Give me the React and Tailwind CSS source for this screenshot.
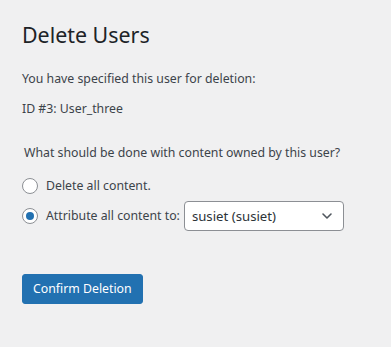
import React, { useState } from 'react';

const App = () => {
  const [choice, setChoice] = useState('reassign');

  return (
    <div className="min-h-[347px] w-[391px] bg-[#f0f0f1] text-[#3c434a] text-[12.3px] leading-[18px]" style={{ fontFamily: '"Segoe UI", "Noto Sans", sans-serif' }}>
      <div className="pl-[22px] pr-5 pt-[20px]">
        <h1 className="text-[21.4px] font-normal leading-[30px] text-[#1d2327]">Delete Users</h1>

        <p className="mt-[20px]">You have specified this user for deletion:</p>
        <p className="mt-[12px]">ID #3: User_three</p>

        <fieldset className="mt-[26px]">
          <p className="pl-[2px]">What should be done with content owned by this user?</p>
          <ul className="mt-[13px] flex flex-col gap-[4px]">
            <li className="flex items-center h-[22px]">
              <label className="flex items-center gap-[8px] cursor-pointer">
                <span
                  onClick={() => setChoice('delete')}
                  className="w-4 h-4 rounded-full border border-[#8c8f94] bg-white flex items-center justify-center"
                >
                  {choice === 'delete' && <span className="w-2 h-2 rounded-full bg-[#2271b1]" />}
                </span>
                <span onClick={() => setChoice('delete')}>Delete all content.</span>
              </label>
            </li>
            <li className="flex items-center h-[30px]">
              <label className="flex items-center gap-[8px] cursor-pointer">
                <span
                  onClick={() => setChoice('reassign')}
                  className="w-4 h-4 rounded-full border border-[#8c8f94] bg-white flex items-center justify-center"
                >
                  {choice === 'reassign' && <span className="w-2 h-2 rounded-full bg-[#2271b1]" />}
                </span>
                <span onClick={() => setChoice('reassign')}>Attribute all content to:</span>
              </label>
              <div className="ml-[4px] w-[160px] h-[30px] rounded-[4px] border border-[#8c8f94] bg-white flex items-center justify-between pl-[7px] pr-[8px] text-[13.2px] text-[#2c3338]">
                <span>susiet (susiet)</span>
                <svg width="16" height="16" viewBox="0 0 20 20" fill="none">
                  <path d="M5 7.5l5 5 5-5" stroke="#50575e" strokeWidth="2" strokeLinecap="round" strokeLinejoin="round" />
                </svg>
              </div>
            </li>
          </ul>
        </fieldset>

        <div className="mt-[43px]">
          <button className="h-[30px] px-[10px] rounded-[3px] bg-[#2271b1] text-white text-[12.3px] border border-[#2271b1]">
            Confirm Deletion
          </button>
        </div>
      </div>
    </div>
  );
};

export default App;
